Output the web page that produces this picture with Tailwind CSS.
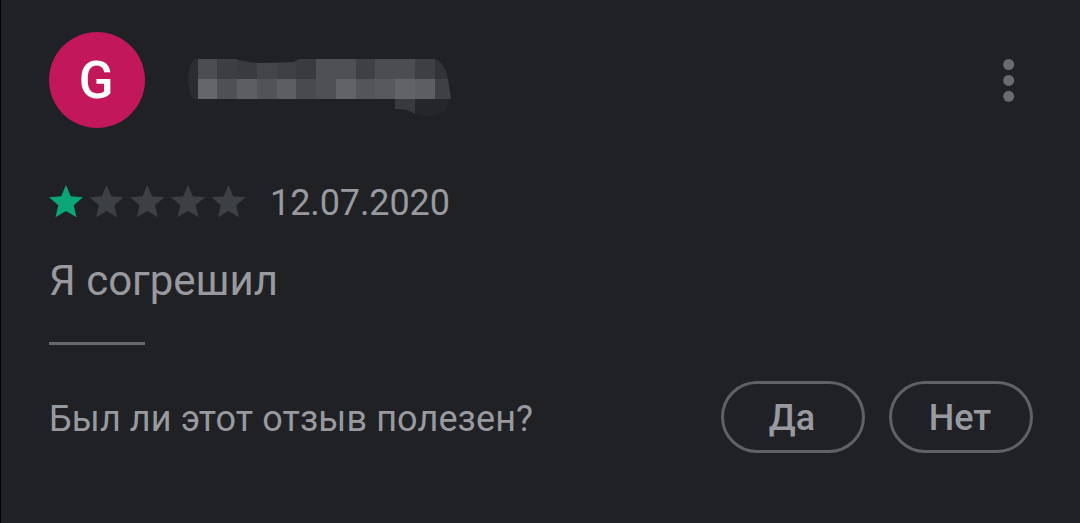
<!DOCTYPE html>
<html lang="ru">
<head>
  <meta charset="UTF-8" />
  <meta name="viewport" content="width=device-width, initial-scale=1.0" />
  <title>Отзыв</title>
  <script src="https://cdn.jsdelivr.net/npm/@tailwindcss/browser@4"></script>
</head>
<body class="bg-[#202124]">
<div class="w-[1080px] h-[523px] overflow-hidden border-l border-black bg-[#202124] pl-12 pr-[47px] pt-8 font-['Roboto',sans-serif] text-[#989a9f]">
  <!-- Author -->
  <div class="flex items-center h-24">
    <div class="flex items-center justify-center size-24 rounded-full bg-[#c2185b] text-white text-[51px] font-medium leading-none">
      <span class="pt-px pr-0.5">G</span>
    </div>
    <!-- Hidden name -->
    <svg class="mt-2.5 ml-[35px] w-[290px] h-[90px]" viewBox="180 40 290 90" shape-rendering="crispEdges">
      <path fill="#2b2c2f" shape-rendering="auto" d="M198 59h-3c-5 5-7 12-7 20s2 15 5 20h5z" />
      <path fill="#252629" shape-rendering="auto" d="M415 99h35c-2 9-8 16-17 17-7 1-13-1-18-3z" />
      <path fill="#3a3b3e" shape-rendering="auto" d="M198 59h36l14 3 10 1 34-1 8-3h135v20H198z" />
      <path fill="#323336" shape-rendering="auto" d="M435 59c7 2 11 9 13 20h-13z" />
      <path fill="#4c4d50" d="M198 59h19v20h-19z" />
      <path fill="#3d3e41" d="M217 59h20v20h-20z" />
      <path fill="#444548" d="M257 63h20v16h-20z" />
      <path fill="#3f4043" d="M277 63h19v16h-19z" />
      <path fill="#4f5053" d="M316 59h40v20h-40z" />
      <path fill="#3f4043" d="M356 59h19v20h-19z" />
      <path fill="#4c4d50" d="M375 59h40v20h-40z" />
      <path fill="#3e3f42" d="M415 59h20v20h-20z" />
      <path fill="#656669" d="M198 79h19v20h-19z" />
      <path fill="#4f5053" d="M217 79h20v20h-20z" />
      <path fill="#5d5e61" d="M237 79h20v20h-20z" />
      <path fill="#525356" d="M257 79h20v20h-20z" />
      <path fill="#5d5e61" d="M277 79h19v20h-19z" />
      <path fill="#494a4d" d="M296 79h20v20h-20z" />
      <path fill="#4f5053" d="M316 79h20v20h-20z" />
      <path fill="#626366" d="M336 79h20v20h-20z" />
      <path fill="#545558" d="M356 79h19v20h-19z" />
      <path fill="#58595c" d="M375 79h20v20h-20z" />
      <path fill="#626366" d="M395 79h20v20h-20z" />
      <path fill="#5d5e61" d="M415 79h20v20h-20z" />
      <path fill="#3f4043" shape-rendering="auto" d="M435 79h13l3 20h-16z" />
      <path fill="#393a3d" shape-rendering="auto" d="M395 99h20v15c-6-4-12-5-20-5z" />
    </svg>
    <svg class="ml-auto mr-[18px] w-3 h-11" viewBox="0 0 12 44" fill="#6a6b6f">
      <circle cx="5.7" cy="6.5" r="5.5" />
      <circle cx="5.7" cy="22.4" r="5.5" />
      <circle cx="5.7" cy="38.3" r="5.5" />
    </svg>
  </div>

  <!-- Rating and date -->
  <div class="flex items-start mt-[55px] h-10">
    <svg class="mt-0.5 w-[197px] h-[33px]" viewBox="0 0 197 33" fill="#3c4043">
      <defs>
        <path id="star" transform="scale(1.7) translate(-2 -2)" d="M12 17.27L18.18 21l-1.64-7.03L22 9.24l-7.19-.61L12 2 9.19 8.63 2 9.24l5.46 4.73L5.82 21z" />
      </defs>
      <use href="#star" fill="#0aa678" />
      <use href="#star" x="40.6" />
      <use href="#star" x="81.3" />
      <use href="#star" x="122" />
      <use href="#star" x="162.5" />
    </svg>
    <span class="ml-6 text-[36px] leading-10 tracking-[-0.1px]">12.07.2020</span>
  </div>

  <!-- Review text -->
  <p class="mt-8 text-[42px] leading-[52px]">Я согрешил</p>
  <div class="mt-[35px] w-24 h-[3px] bg-[#66686c]"></div>

  <!-- Feedback -->
  <div class="flex items-center mt-9 h-[72px]">
    <p class="pt-1 text-[36px] tracking-[0.12px]">Был ли этот отзыв полезен?</p>
    <button class="ml-auto w-36 h-[72px] rounded-full border-3 border-[#5f6165] pt-0.5 pr-0.5 text-[36px] font-medium">Да</button>
    <button class="ml-6 w-36 h-[72px] rounded-full border-3 border-[#5f6165] pt-0.5 pr-0.5 text-[36px] font-medium">Нет</button>
  </div>
</div>
</body>
</html>
